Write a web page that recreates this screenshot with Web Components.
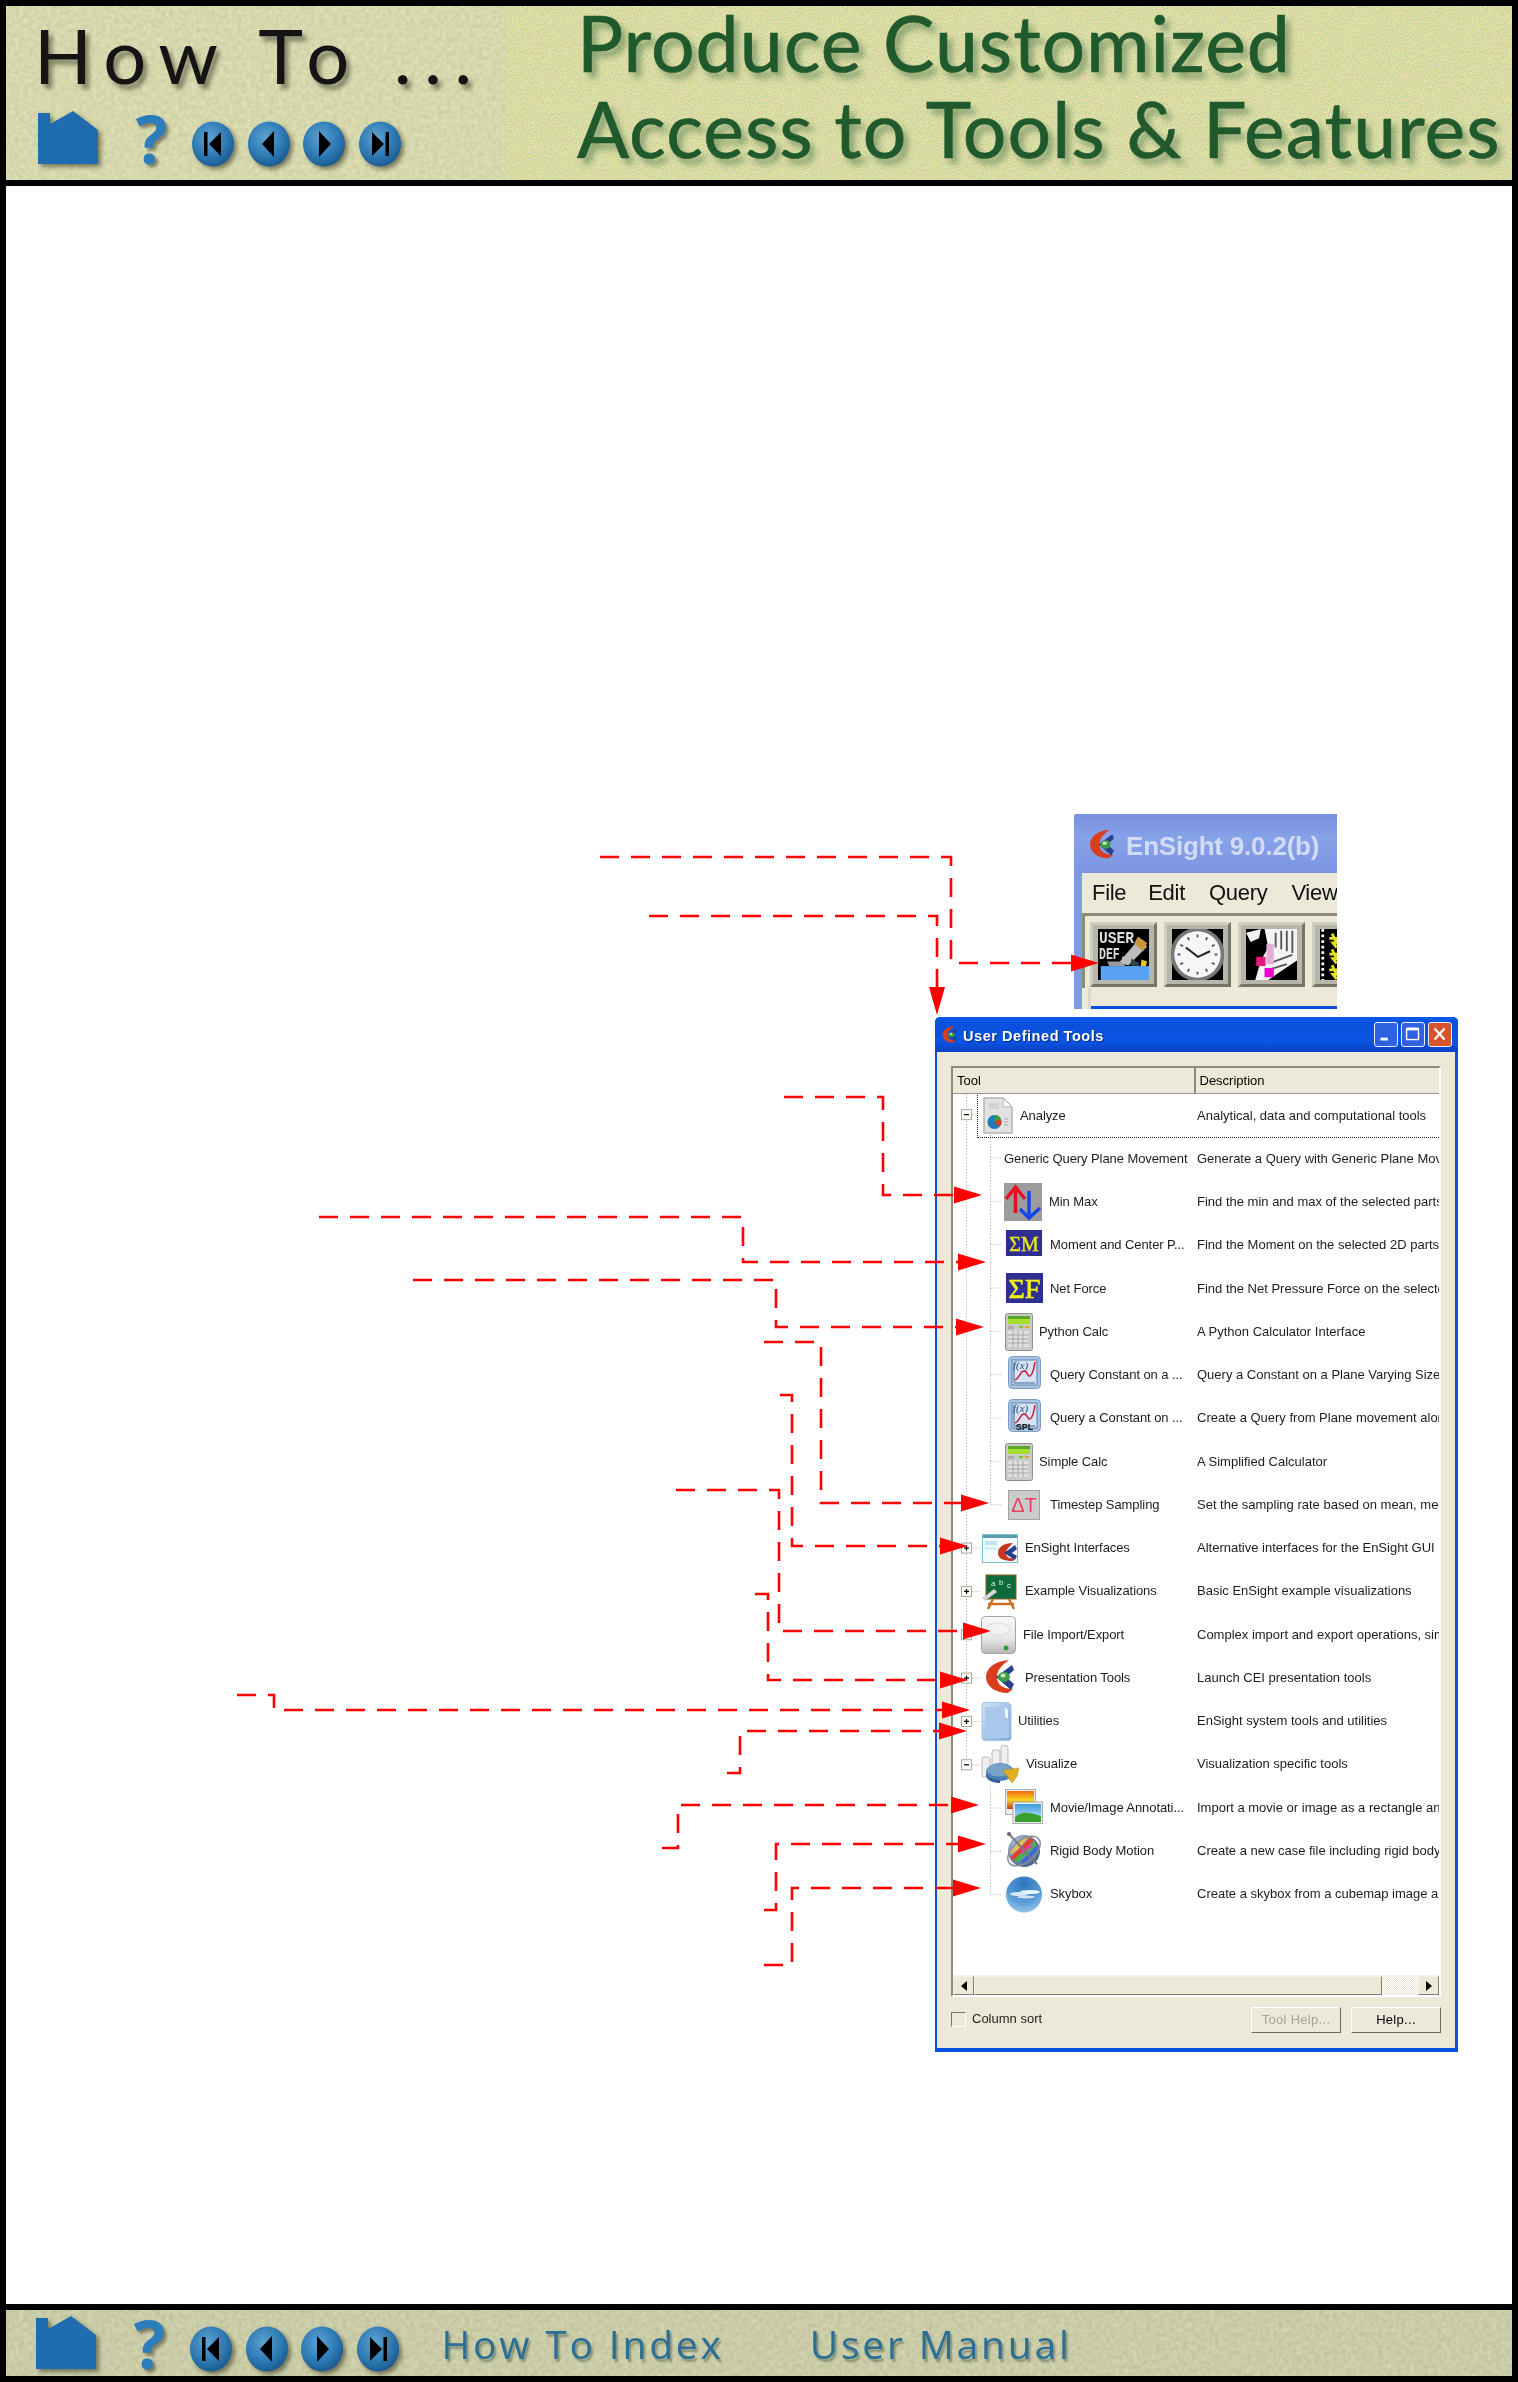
<!DOCTYPE html>
<html lang="en">
<head>
<meta charset="utf-8">
<title>How To Produce Customized Access to Tools &amp; Features</title>
<style>
  html, body { margin: 0; padding: 0; background: #000; }
</style>
</head>
<body>
<how-to-page>
  <how-to-banner slot="top"></how-to-banner>
  <ensight-toolbar slot="canvas"></ensight-toolbar>
  <tool-window slot="canvas">
    <tree-row icon="analyze" selected style="--ix:28px;--iw:32px;--ih:38px;--gap:7px">Analyze<span slot="desc">Analytical, data and computational tools</span></tree-row>
    <tree-row style="--ix:51px;--iw:0px;--ih:1px;--gap:0px">Generic Query Plane Movement<span slot="desc">Generate a Query with Generic Plane Movement</span></tree-row>
    <tree-row icon="minmax" style="--ix:51px;--iw:38px;--ih:38px;--gap:7px">Min Max<span slot="desc">Find the min and max of the selected parts</span></tree-row>
    <tree-row icon="summ" style="--ix:53px;--iw:36px;--ih:26px;--gap:8px;--iy:-2px">Moment and Center P...<span slot="desc">Find the Moment on the selected 2D parts</span></tree-row>
    <tree-row icon="sumf" style="--ix:53px;--iw:37px;--ih:30px;--gap:7px;--iy:-1px">Net Force<span slot="desc">Find the Net Pressure Force on the selected</span></tree-row>
    <tree-row icon="calc" style="--ix:52px;--iw:28px;--ih:38px;--gap:6px">Python Calc<span slot="desc">A Python Calculator Interface</span></tree-row>
    <tree-row icon="query" style="--ix:55px;--iw:33px;--ih:34px;--gap:9px;--iy:-2px">Query Constant on a ...<span slot="desc">Query a Constant on a Plane Varying Size</span></tree-row>
    <tree-row icon="queryspl" style="--ix:55px;--iw:33px;--ih:34px;--gap:9px;--iy:-2px">Query a Constant on ...<span slot="desc">Create a Query from Plane movement along</span></tree-row>
    <tree-row icon="calc" style="--ix:52px;--iw:28px;--ih:38px;--gap:6px">Simple Calc<span slot="desc">A Simplified Calculator</span></tree-row>
    <tree-row icon="deltat" style="--ix:55px;--iw:32px;--ih:30px;--gap:10px">Timestep Sampling<span slot="desc">Set the sampling rate based on mean, median</span></tree-row>
    <tree-row icon="interfaces" style="--ix:29px;--iw:36px;--ih:29px;--gap:7px">EnSight Interfaces<span slot="desc">Alternative interfaces for the EnSight GUI</span></tree-row>
    <tree-row icon="board" style="--ix:29px;--iw:35px;--ih:35px;--gap:8px">Example Visualizations<span slot="desc">Basic EnSight example visualizations</span></tree-row>
    <tree-row icon="disk" style="--ix:28px;--iw:35px;--ih:38px;--gap:7px">File Import/Export<span slot="desc">Complex import and export operations, similar</span></tree-row>
    <tree-row icon="logo" style="--ix:32px;--iw:30px;--ih:35px;--gap:10px;--iy:-1px">Presentation Tools<span slot="desc">Launch CEI presentation tools</span></tree-row>
    <tree-row icon="folder" style="--ix:28px;--iw:31px;--ih:39px;--gap:6px">Utilities<span slot="desc">EnSight system tools and utilities</span></tree-row>
    <tree-row icon="visualize" style="--ix:28px;--iw:38px;--ih:39px;--gap:7px">Visualize<span slot="desc">Visualization specific tools</span></tree-row>
    <tree-row icon="movie" style="--ix:52px;--iw:38px;--ih:35px;--gap:7px;--iy:-1px">Movie/Image Annotati...<span slot="desc">Import a movie or image as a rectangle and</span></tree-row>
    <tree-row icon="rigid" style="--ix:51px;--iw:39px;--ih:37px;--gap:7px;--iy:-1px">Rigid Body Motion<span slot="desc">Create a new case file including rigid body</span></tree-row>
    <tree-row icon="skybox" style="--ix:53px;--iw:36px;--ih:37px;--gap:8px">Skybox<span slot="desc">Create a skybox from a cubemap image and</span></tree-row>
  </tool-window>
  <callout-arrows slot="over"></callout-arrows>
  <how-to-footer slot="bottom"></how-to-footer>
</how-to-page>

<script>
  // Mottled paper fill behind the banners
  class NoiseFill extends HTMLElement {
    connectedCallback() {
      const base = (this.getAttribute('base') || '.83 .84 .66').split(' ').map(Number);
      const k = parseFloat(this.getAttribute('amount') || '.3');
      const freq = this.getAttribute('freq') || '.5';
      const mono = this.hasAttribute('mono');
      const row = (i) => {
        const cells = [0, 0, 0, 0];
        cells[mono ? 0 : i] = k;
        return `${cells.join(' ')} ${base[i] - k / 2}`;
      };
      this.attachShadow({ mode: 'open' }).innerHTML = `
        <style>
          :host { position: absolute; inset: 0; display: block; overflow: hidden; }
          svg { display: block; width: 100%; height: 100%; }
        </style>
        <svg>
          <filter id="n" x="0" y="0" width="100%" height="100%" color-interpolation-filters="sRGB">
            <feTurbulence type="fractalNoise" baseFrequency="${freq}" numOctaves="2" seed="4"/>
            <feColorMatrix type="matrix" values="${row(0)} ${row(1)} ${row(2)} 0 0 0 0 1"/>
          </filter>
          <rect width="100%" height="100%" filter="url(#n)"/>
        </svg>`;
    }
  }
  customElements.define('noise-fill', NoiseFill);

  // House, question mark and the four round page buttons
  class NavIcons extends HTMLElement {
    constructor() {
      super();
      const ball = (inner) => `
        <svg class="ball" viewBox="0 0 44 46">
          <defs><radialGradient id="g" cx=".42" cy=".36" r=".7">
            <stop offset="0" stop-color="#5fa4d2"/><stop offset=".6" stop-color="#2c79b4"/><stop offset="1" stop-color="#185488"/>
          </radialGradient></defs>
          <ellipse cx="22" cy="23" rx="21" ry="22.5" fill="url(#g)"/>
          ${inner}
        </svg>`;
      this.attachShadow({ mode: 'open' }).innerHTML = `
        <style>
          :host { display: flex; align-items: flex-end; filter: blur(.5px); }
          svg { display: block; filter: drop-shadow(3px 3px 2px rgba(50,50,30,.55)); }
          .house { width: 60px; height: 53px; }
          .help {
            font: 700 66px/52px "Open Sans", sans-serif;
            color: #2b7dbb; width: 37px; margin: 0 21px 0 35px; text-align: center;
            text-shadow: 3px 3px 3px rgba(50,50,30,.5);
          }
          .balls { display: flex; gap: 11.5px; margin-bottom: -3px; }
          .ball { width: 44px; height: 46px; }
        </style>
        <svg class="house" viewBox="0 0 60 53"><path d="M0 2H12V13L35 0 60 19V53H0Z" fill="#1f6cb0"/></svg>
        <span class="help">?</span>
        <div class="balls">
          ${ball('<path d="M13 11h3.500v24H13zM30 11v24L18 23Z" fill="#000"/>')}
          ${ball('<path d="M27 10v26L15 23Z" fill="#000"/>')}
          ${ball('<path d="M17 10v26l12-13Z" fill="#000"/>')}
          ${ball('<path d="M14 11v24l12-12ZM27.500 11H31v24h-3.500z" fill="#000"/>')}
        </div>`;
    }
  }
  customElements.define('nav-icons', NavIcons);

  class HowToBanner extends HTMLElement {
    constructor() {
      super();
      this.attachShadow({ mode: 'open' }).innerHTML = `
        <style>
          :host { display: flex; height: 174px; }
          .left, .right { position: relative; }
          .left { width: 500px; flex: none; }
          .right { flex: 1; }
          .stack { position: relative; height: 100%; box-sizing: border-box; }
          .left .stack { padding: 5px 0 0 28px; }
          .how {
            font: 400 76px/88px Lato, "Open Sans", sans-serif; letter-spacing: 12.400px; color: #141414;
            text-shadow: 4px 5px 4px rgba(60,60,40,.55); white-space: nowrap; filter: blur(.5px);
          }
          nav-icons { margin: 12px 0 0 4px; }
          .right .stack { padding: 0 0 0 71px; }
          .line {
            font: 400 77px/87px Lato, "Open Sans", sans-serif; color: #205a2c; white-space: nowrap;
            text-shadow: 5px 6px 6px rgba(45,95,55,.5); -webkit-text-stroke: .7px #205a2c; filter: blur(.5px);
            margin-top: -7px; letter-spacing: 1px;
          }
          .line + .line { margin-top: -1px; }
        </style>
        <div class="left">
          <noise-fill mono base=".84 .845 .68" amount=".12" freq=".22"></noise-fill>
          <div class="stack">
            <div class="how">How To ...</div>
            <nav-icons></nav-icons>
          </div>
        </div>
        <div class="right">
          <noise-fill base=".85 .86 .64" amount=".32" freq=".8"></noise-fill>
          <div class="stack">
            <div class="line">Produce Customized</div>
            <div class="line">Access to Tools &amp; Features</div>
          </div>
        </div>`;
    }
  }
  customElements.define('how-to-banner', HowToBanner);

  class HowToFooter extends HTMLElement {
    constructor() {
      super();
      this.attachShadow({ mode: 'open' }).innerHTML = `
        <style>
          :host { display: block; position: relative; height: 66px; }
          .row { position: relative; display: flex; align-items: center; height: 100%; padding: 0 0 0 30px; }
          nav-icons { margin-top: -2px; }
          a {
            font: 500 39px/1 "Open Sans", sans-serif; color: #2c6f94; white-space: nowrap; letter-spacing: 2.800px;
            text-shadow: 2px 3px 2px rgba(50,70,60,.45); text-decoration: none; filter: blur(.4px);
          }
          .index { margin-left: 42px; }
          .manual { margin-left: 86px; }
        </style>
        <noise-fill mono base=".79 .80 .655" amount=".12" freq=".22"></noise-fill>
        <div class="row">
          <nav-icons></nav-icons>
          <a class="index">How To Index</a>
          <a class="manual">User Manual</a>
        </div>`;
    }
  }
  customElements.define('how-to-footer', HowToFooter);

  // The drawn pictures for the tree and the toolbar
  const LOGO = `
    <path d="M24 1C10 2 1 9 1 18s9 16 22 16l5-4C18 30 12 26 12 18 12 11 17 6 24 1Z" fill="#d93d1c"/>
    <path d="M27 6 11 18l15 13 3-6-8-7 8-7Z" fill="#27418f"/>
    <ellipse cx="19" cy="18" rx="6" ry="5" fill="#3f9d45"/>
    <ellipse cx="18" cy="16.500" rx="2.500" ry="2" fill="#c5ecc0"/>`;
  const CALC = `
    <rect x=".5" y=".5" width="27" height="37" rx="2" fill="#c9cbc8" stroke="#8d918d"/>
    <rect x="3" y="3" width="22" height="8" fill="#a6e02c"/><rect x="3" y="3" width="22" height="3" fill="#5aa62a"/>
    <rect x="3" y="13" width="6" height="3" fill="#aaa"/><rect x="14" y="13" width="4" height="2" fill="#7fc03c"/><rect x="20" y="13" width="4" height="2" fill="#e0a030"/>
    <path d="M3 18h21v16H3Z" fill="#dfe1df"/><path d="M3 22h21M3 26h21M3 30h21M8 18v16M13 18v16M18 18v16" stroke="#a4a8a6"/>`;
  const QUERY = (extra) => `
    <rect x=".5" y=".5" width="32" height="32" rx="4" fill="#a9c4e2" stroke="#7d9cc2"/>
    <rect x="4" y="4" width="25" height="25" fill="#d6e3f2" stroke="#5f80ac"/>
    <text x="5" y="13" font-family="Liberation Serif" font-style="italic" font-size="11" fill="#234a80">f(x)</text>
    <path d="M6 6v21h21" fill="none" stroke="#3a66a0"/>
    <path d="M7 24c5-2 5-9 9-9s3 6 6 5 4-8 5-14" fill="none" stroke="#c8203a" stroke-width="1.500"/>${extra}`;
  const ICONS = {
    logo: ['0 0 30 35', LOGO],
    analyze: ['0 0 32 38', `
      <path d="M3 1H22L31 10V36H3Z" fill="#e2e2e2" stroke="#b4b4b4" stroke-width="1.500"/>
      <path d="M22 1V10H31Z" fill="#fafafa" stroke="#b4b4b4"/>
      <rect x="8" y="6" width="10" height="6" fill="#d2d2d2"/>
      <circle cx="13.500" cy="25" r="7" fill="#1d7bb8"/><path d="M13.500 25V18A7 7 0 0 1 20 22Z" fill="#3da140"/><path d="M13.500 25 20 22A7 7 0 0 1 18 30Z" fill="#d43f20"/>
      <path d="M23 22h4M23 25h4M23 28h4" stroke="#bbb" stroke-width="1.500"/>`],
    minmax: ['0 0 38 38', `
      <rect width="38" height="38" fill="#9c9c9c"/>
      <path d="M11.500 30V5M2 16 11.500 4 21 16" fill="none" stroke="#e8101c" stroke-width="3.500"/>
      <path d="M25 8V34M16 26 25 35 36 25" fill="none" stroke="#1846e8" stroke-width="3.500"/>`],
    summ: ['0 0 36 26', `<rect width="36" height="26" fill="#2f2f92"/>
      <text x="18" y="20.500" text-anchor="middle" font-family="Liberation Serif" font-size="20" fill="#e6e620" stroke="#e6e620" stroke-width=".4">ΣM</text>`],
    sumf: ['0 0 37 30', `<rect width="37" height="30" fill="#2f2f92"/>
      <text x="18.500" y="25" text-anchor="middle" font-family="Liberation Serif" font-size="28" fill="#efef14" stroke="#efef14" stroke-width=".6">ΣF</text>`],
    calc: ['0 0 28 38', CALC],
    query: ['0 0 33 34', QUERY('')],
    queryspl: ['0 0 33 34', QUERY('<text x="16.500" y="31" text-anchor="middle" font-family="Liberation Sans" font-weight="bold" font-size="9" fill="#111">SPL</text>')],
    deltat: ['0 0 32 30', `<rect x=".5" y=".5" width="31" height="29" fill="#cbcbcb" stroke="#a3a3a3"/>
      <text x="16" y="22" text-anchor="middle" font-family="Liberation Sans" font-size="20" fill="#ec3f62">ΔT</text>`],
    interfaces: ['0 0 36 29', `<rect x=".5" y=".5" width="35" height="28" fill="#f4fbfd" stroke="#7cc4d2"/><rect x="1" y="1" width="34" height="3" fill="#5a9cb0"/>
      <rect x="3" y="7" width="12" height="4" fill="#bfe8f2"/><rect x="3" y="13" width="14" height="3" fill="#d7f1f6"/>
      <path d="M31 9C22 9 16 13 16 19s6 8 15 8l2-3c-6 1-9-1-9-5 0-3 3-6 7-10Z" fill="#c9381e"/><path d="M33 11 22 19l11 7 2-4-5-3 5-4Z" fill="#27418f"/>`],
    board: ['0 0 35 35', `<rect x="4" y="1" width="30" height="24" fill="#0f6a3a" stroke="#8a5a20"/>
      <text x="9" y="12" font-family="Liberation Sans" font-size="8" fill="#dff2e2">a</text><text x="17" y="11" font-family="Liberation Sans" font-size="8" fill="#dff2e2">b</text><text x="25" y="14" font-family="Liberation Sans" font-size="8" fill="#dff2e2">c</text>
      <path d="M1 24 12 15l3 3L4 26Z" fill="#d8d8d8" stroke="#999" stroke-width=".500"/>
      <path d="M11 25 6 35M27 25l5 10M6 30h26" stroke="#c8702a" stroke-width="2.500" fill="none"/>`],
    disk: ['0 0 35 38', `<defs><linearGradient id="d" x1="0" y1="0" x2="0" y2="1"><stop offset="0" stop-color="#f8f8f8"/><stop offset=".6" stop-color="#e8e8e8"/><stop offset="1" stop-color="#b6b6b6"/></linearGradient></defs>
      <rect x=".5" y=".5" width="34" height="37" rx="4" fill="url(#d)" stroke="#a4a4a4"/><ellipse cx="17" cy="13" rx="12" ry="6" fill="#f2f2f2" stroke="#dcdcdc"/>
      <circle cx="25" cy="32" r="2.500" fill="#2e9a3c"/>`],
    folder: ['0 0 31 39', `<defs><linearGradient id="f" x1="0" y1="0" x2="1" y2="1"><stop offset="0" stop-color="#d2e4f7"/><stop offset="1" stop-color="#7aa8dc"/></linearGradient></defs>
      <path d="M1 2 3 .5H27L30 3V37L28 38.500H3L1 37Z" fill="url(#f)" stroke="#a6c2e2"/><path d="M4 5H24V16L28 19V36H4Z" fill="#a9c8ec"/><path d="M24 5l3 3v9l-3-2Z" fill="#eef5fc"/>`],
    visualize: ['0 0 38 39', `<rect x="1" y="12" width="8" height="20" rx="2" fill="#eee" stroke="#bbb"/><rect x="11" y="5" width="8" height="22" rx="2" fill="#eee" stroke="#bbb"/><rect x="20" y="0.500" width="7" height="26" rx="2" fill="#eee" stroke="#bbb"/>
      <ellipse cx="19" cy="27" rx="14" ry="9" fill="#4b80b4"/><path d="M5 27v3c0 5 7 8 14 8v-3c-7 0-14-3-14-8Z" fill="#2d5f94"/><ellipse cx="18" cy="25" rx="12" ry="6.500" fill="#7aa2c8"/>
      <path d="M22 25 38 23 36 31 31 38Z" fill="#e2ae22" stroke="#b5871a" stroke-width=".500"/>`],
    movie: ['0 0 38 35', `<defs><linearGradient id="a" x1="0" y1="0" x2="0" y2="1"><stop offset="0" stop-color="#f06a10"/><stop offset=".5" stop-color="#f8d020"/><stop offset="1" stop-color="#c83018"/></linearGradient>
      <linearGradient id="s" x1="0" y1="0" x2="0" y2="1"><stop offset="0" stop-color="#3a9ce0"/><stop offset="1" stop-color="#d6eefa"/></linearGradient></defs>
      <rect x=".5" y=".5" width="30" height="25" fill="#eee" stroke="#aaa"/><rect x="2" y="2" width="27" height="18" fill="url(#a)"/>
      <rect x="8" y="13" width="29.500" height="21.500" fill="#eee" stroke="#aaa"/><rect x="10" y="15" width="26" height="18" fill="url(#s)"/><path d="M10 33V28C16 22 24 23 36 27V33Z" fill="#3aa030"/>`],
    rigid: ['0 0 39 37', `<defs><radialGradient id="r" cx=".35" cy=".35" r=".8"><stop offset="0" stop-color="#c7d4f0"/><stop offset="1" stop-color="#33507c"/></radialGradient></defs>
      <circle cx="20" cy="20" r="16" fill="url(#r)"/>
      <path d="M8 28 28 8" stroke="#e0402c" stroke-width="5"/><path d="M12 30 31 12" stroke="#46b04a" stroke-width="5"/><path d="M18 32 33 17" stroke="#3a68d8" stroke-width="4"/><path d="M7 22 22 7" stroke="#e8c030" stroke-width="3"/><path d="M17 22 28 14" stroke="#e040b0" stroke-width="3"/>
      <ellipse cx="20" cy="20" rx="19" ry="11" transform="rotate(-40 20 20)" fill="none" stroke="#8a8f96" stroke-width="1.500"/>
      <path d="M4 2 33 33" stroke="#747a82" stroke-width="2"/><circle cx="5" cy="3" r="2" fill="#667"/>`],
    skybox: ['0 0 36 37', `<defs><radialGradient id="k" cx=".5" cy=".2" r=".9"><stop offset="0" stop-color="#2c74bc"/><stop offset=".6" stop-color="#5d9fd8"/><stop offset="1" stop-color="#a9d2ee"/></radialGradient></defs>
      <circle cx="18" cy="18.500" r="18" fill="url(#k)"/><ellipse cx="24" cy="16" rx="10" ry="2" fill="#eaf3fa"/><ellipse cx="13" cy="18" rx="9" ry="2" fill="#d7e8f6"/><ellipse cx="20" cy="21" rx="9" ry="1.500" fill="#cfe3f4"/>`]
  };

  class ToolIcon extends HTMLElement {
    connectedCallback() {
      const icon = ICONS[this.getAttribute('name')];
      this.attachShadow({ mode: 'open' }).innerHTML = `
        <style>
          :host { display: block; }
          svg { display: block; width: 100%; height: 100%; overflow: visible; }
        </style>
        ${icon ? `<svg viewBox="${icon[0]}">${icon[1]}</svg>` : ''}`;
    }
  }
  customElements.define('tool-icon', ToolIcon);

  class TreeRow extends HTMLElement {
    connectedCallback() {
      const icon = this.getAttribute('icon');
      this.attachShadow({ mode: 'open' }).innerHTML = `
        <style>
          :host {
            display: grid; grid-template-columns: 244px 1fr; height: 43.25px; align-items: center;
            position: relative; box-sizing: border-box; white-space: nowrap; color: #1c1c1c;
          }
          :host([selected])::after {
            content: ""; position: absolute; left: 24px; right: -2px; top: -2px; bottom: -1px; border: 1px dotted #222;
          }
          .tool { display: flex; align-items: center; padding-left: var(--ix, 0); min-width: 0; }
          tool-icon { flex: none; width: var(--iw); height: var(--ih); transform: translateY(var(--iy, 0)); }
          .label { margin-left: var(--gap, 6px); letter-spacing: -.08px; }
          .desc { overflow: hidden; min-width: 0; }
        </style>
        <div class="tool">
          ${icon ? `<tool-icon name="${icon}"></tool-icon>` : ''}
          <span class="label"><slot></slot></span>
        </div>
        <div class="desc"><slot name="desc"></slot></div>`;
    }
  }
  customElements.define('tree-row', TreeRow);

  // Dialog with the tree of tools; rows are slotted in by the page
  class ToolWindow extends HTMLElement {
    constructor() {
      super();
      const h = 43.25;
      const mid = (i) => (21.6 + i * h - 1).toFixed(1);
      const parents = [0, 10, 11, 12, 13, 14, 15];
      let lines = `M13.500 0V${mid(15)}M37.500 41V${mid(9)}M37.500 691V${mid(18)}`;
      for (let i = 0; i < 19; i++) {
        lines += parents.includes(i) ? `M13.500 ${mid(i)}H27` : `M37.500 ${mid(i)}H49`;
      }
      let boxes = '';
      parents.forEach((i) => {
        const y = parseFloat(mid(i));
        const minus = i === 0 || i === 15;
        boxes += `<rect x="8.500" y="${y - 5}" width="10" height="10" fill="#fff" stroke="#a8a899"/>
          <path d="M11 ${y}h5${minus ? '' : `M13.500 ${y - 2.500}v5`}" stroke="#000" stroke-width="1.200"/>`;
      });
      this.attachShadow({ mode: 'open' }).innerHTML = `
        <style>
          :host {
            position: absolute; left: 929px; top: 831px; width: 523px; height: 1035px; box-sizing: border-box;
            display: flex; flex-direction: column; background: #0a4fe0; border-radius: 5px 5px 0 0;
            font: 13px/16px "Liberation Sans", Arial, sans-serif; filter: blur(.35px); padding: 0 3px 4px 2px;
          }
          .title {
            height: 35px; flex: none; display: flex; align-items: center; margin: 0 -3px 0 -2px; padding: 0 6px 0 7px;
            background: linear-gradient(#0a5be8, #0a50dc 20%, #0b55e4 70%, #0a3fc0);
            border-radius: 5px 5px 0 0; color: #fff; font: bold 14.500px/1 "Liberation Sans", sans-serif; letter-spacing: .55px;
            text-shadow: 1px 1px 1px #0a2a80; box-sizing: border-box;
          }
          .title tool-icon { width: 15px; height: 19px; margin-right: 6px; flex: none; }
          .title span { flex: 1; padding-top: 4px; }
          .wb { width: 24px; height: 25px; margin-left: 3px; box-sizing: border-box; border: 1px solid #e8eefc; border-radius: 3px; background: #2f62e0; }
          .wb svg { display: block; width: 100%; height: 100%; }
          .wb.close { background: #d8532c; }
          .client { flex: 1; min-height: 0; background: #ece9d8; padding: 14px 14px 0 14px; display: flex; flex-direction: column; }
          .panel {
            height: 931px; flex: none; box-sizing: border-box; border: 2px solid; border-color: #8c8a78 #fff #fff #8c8a78;
            display: flex; flex-direction: column; background: #ece9d8;
          }
          .head { display: grid; grid-template-columns: 240.500px 1fr; height: 26px; flex: none; border-bottom: 1px solid #98968a; box-sizing: border-box; }
          .head div { padding: 5px 0 0 4px; }
          .head div + div { border-left: 2px solid #8c8a78; }
          .list { position: relative; flex: 1; background: #fff; min-height: 0; overflow: hidden; }
          .list svg { position: absolute; left: 0; top: 0; width: 100%; height: 100%; }
          .rows { position: relative; }
          .scroll { height: 20px; flex: none; display: flex; background: #ece9d8; border-top: 1px solid #f6f4ea; box-sizing: border-box; }
          .sb { flex: none; box-sizing: border-box; border: 1px solid; border-color: #f4f2e6 #807e6e #807e6e #f4f2e6; display: flex; align-items: center; justify-content: center; font-size: 0; }
          .sb svg { width: 6px; height: 10px; }
          .btn { width: 21px; }
          .thumb { width: 408px; }
          .track { flex: 1; background: repeating-conic-gradient(#ece9d8 0 25%, #fff 0 50%) 0 0 / 2px 2px; }
          .foot { flex: 1; display: flex; align-items: flex-start; padding: 10px 0 0 0; }
          .check { width: 15px; height: 15px; flex: none; box-sizing: border-box; background: #ece9d8; border: 1px solid; border-color: #7a7868 #fff #fff #7a7868; margin: 5px 6px 0 0; }
          .sort { margin-top: 4px; flex: 1; color: #222; }
          .pb {
            width: 90px; height: 26px; box-sizing: border-box; border: 1px solid; border-color: #fff #6e6c5c #6e6c5c #fff;
            display: flex; align-items: center; justify-content: center; margin-left: 10px; letter-spacing: .3px;
          }
          .pb.off { color: #a5a396; }
        </style>
        <div class="title">
          <tool-icon name="logo"></tool-icon>
          <span>User Defined Tools</span>
          <div class="wb"><svg viewBox="0 0 24 25"><rect x="6" y="16" width="8" height="3" fill="#fff"/></svg></div>
          <div class="wb"><svg viewBox="0 0 24 25"><rect x="5" y="6" width="13" height="12" fill="none" stroke="#fff" stroke-width="1.500"/><rect x="5" y="5" width="13" height="3" fill="#fff"/></svg></div>
          <div class="wb close"><svg viewBox="0 0 24 25"><path d="M6 6 17 18M17 6 6 18" stroke="#fff" stroke-width="2.500"/></svg></div>
        </div>
        <div class="client">
          <div class="panel">
            <div class="head"><div>Tool</div><div>Description</div></div>
            <div class="list">
              <svg viewBox="0 0 485 881" preserveAspectRatio="xMinYMin slice">
                <path d="${lines}" fill="none" stroke="#a9a99a" stroke-dasharray="1 2"/>
                ${boxes}
              </svg>
              <div class="rows"><slot></slot></div>
            </div>
            <div class="scroll">
              <div class="sb btn"><svg viewBox="0 0 6 10"><path d="M6 0V10L0 5Z"/></svg></div>
              <div class="sb thumb"></div>
              <div class="track"></div>
              <div class="sb btn"><svg viewBox="0 0 6 10"><path d="M0 0V10L6 5Z"/></svg></div>
            </div>
          </div>
          <div class="foot">
            <div class="check"></div>
            <div class="sort">Column sort</div>
            <div class="pb off">Tool Help...</div>
            <div class="pb">Help...</div>
          </div>
        </div>`;
    }
  }
  customElements.define('tool-window', ToolWindow);

  // Crop of the EnSight main window: title, menu and tool icons
  class EnsightToolbar extends HTMLElement {
    constructor() {
      super();
      this.attachShadow({ mode: 'open' }).innerHTML = `
        <style>
          :host {
            position: absolute; left: 1068px; top: 628px; width: 263px; height: 195px; overflow: hidden;
            display: flex; flex-direction: column; background: #7e9ae4; filter: blur(.35px);
            font-family: "Liberation Sans", sans-serif; border-top-left-radius: 3px;
          }
          .bar { height: 59px; flex: none; display: flex; align-items: center; padding-left: 15px; background: linear-gradient(#7890e0, #86a2e8 40%, #7c96e2); }
          .bar tool-icon { width: 26px; height: 30px; flex: none; }
          .bar b { font-size: 26px; letter-spacing: -.2px; color: #d3dcf6; margin-left: 11px; white-space: nowrap; padding-top: 5px; }
          .body { flex: 1; margin-left: 8px; background: #ece9d8; display: flex; flex-direction: column; min-height: 0; }
          .menu { height: 40px; flex: none; display: flex; align-items: center; font-size: 22px; color: #111; white-space: nowrap; padding-left: 10px; overflow: hidden; letter-spacing: -.3px; }
          .menu span:nth-child(2) { margin-left: 22px; }
          .menu span:nth-child(3) { margin-left: 24px; }
          .menu span:nth-child(4) { margin-left: 24px; }
          .tools { height: 75px; flex: none; display: flex; gap: 7px; box-sizing: border-box; border-top: 3px solid #8d8b78; border-left: 3px solid #8d8b78; padding: 6px 0 0 5px; overflow: hidden; }
          .tb { width: 67px; height: 65px; flex: none; box-sizing: border-box; background: #b7b6aa; border: 3px solid; border-color: #cfcdbf #77756a #77756a #cfcdbf; padding: 4px; }
          .tb svg { display: block; width: 100%; height: 100%; }
          .rest { flex: 1; border-left: 3px solid #dcd9c8; margin-left: 6px; display: flex; flex-direction: column; justify-content: flex-end; }
          .rest div { height: 3px; background: #0a4fe0; margin-left: 0; }
        </style>
        <div class="bar"><tool-icon name="logo"></tool-icon><b>EnSight 9.0.2(b)</b></div>
        <div class="body">
          <div class="menu"><span>File</span><span>Edit</span><span>Query</span><span>View</span></div>
          <div class="tools">
            <div class="tb"><svg viewBox="0 0 55 55">
              <rect width="55" height="55" fill="#000"/>
              <text x="1" y="15" font-family="Liberation Mono" font-weight="bold" font-size="17" textLength="38" lengthAdjust="spacingAndGlyphs" fill="#ddd">USER</text>
              <text x="1" y="32" font-family="Liberation Mono" font-weight="bold" font-size="17" textLength="30" lengthAdjust="spacingAndGlyphs" fill="#ddd">DEF.</text>
              <path d="M22 37 43 12l10 7-20 20Z" fill="#bbb"/><path d="M43 8l10 7-4 9-10-8Z" fill="#c8963c"/>
              <path d="M10 35h14l6 5H12Z" fill="#9a9a9a"/><path d="M36 32l9 5-3 5-7-3Z" fill="#344"/><path d="M47 33l6 2-2 7-5-2Z" fill="#e0c820"/>
              <rect x="3" y="40" width="52" height="15" fill="#5aa2f4"/>
            </svg></div>
            <div class="tb"><svg viewBox="0 0 55 55">
              <rect width="55" height="55" fill="#000"/><circle cx="27.500" cy="27.500" r="29" fill="#777"/><circle cx="27.500" cy="27.500" r="25" fill="#f6f6f6"/>
              <path d="M27.500 6v3M27.500 46v3M6 27.500h3M46 27.500h3M17 9l1.500 3M38 9l-1.500 3M17 46l1.500-3M38 46l-1.500-3M9 17l3 1.500M46 17l-3 1.500M9 38l3-1.500M46 38l-3-1.500" stroke="#555" stroke-width="2"/>
              <path d="M15 20 28 30 41 24" fill="none" stroke="#222" stroke-width="2.200"/>
            </svg></div>
            <div class="tb"><svg viewBox="0 0 55 55">
              <rect width="55" height="55" fill="#000"/>
              <path d="M20 0H55V34L40 44 24 55H10L16 34 24 20Z" fill="#f4f4f4"/>
              <path d="M32 4v16M38 2v20M44 2v22M50 2v24M28 36l22-8M24 44l20-6" stroke="#555" stroke-width="2" fill="none"/>
              <path d="M0 4 16 0 14 10 5 14Z" fill="#f4f4f4"/><rect x="22" y="16" width="8" height="22" fill="#e4b0d8"/>
              <rect x="11" y="30" width="10" height="10" fill="#e01a80"/><rect x="20" y="42" width="10" height="10" fill="#f000d0"/>
            </svg></div>
            <div class="tb"><svg viewBox="0 0 55 55">
              <rect width="55" height="55" fill="#000"/>
              <path d="M3 0V55" stroke="#fff" stroke-width="3" stroke-dasharray="3 3"/>
              <path d="M10 10h14M13 5l5 10-4 0 4 5M10 27h14M13 22l5 10-4 0 4 5M10 44h14M13 39l5 10-4 0 4 5" stroke="#e8e020" stroke-width="3" fill="none"/>
            </svg></div>
          </div>
          <div class="rest"><div></div></div>
        </div>`;
    }
  }
  customElements.define('ensight-toolbar', EnsightToolbar);

  // Red dashed callouts, drawn in page coordinates
  class CalloutArrows extends HTMLElement {
    constructor() {
      super();
      const runs = [
        [[600, 857], [951, 857], [951, 963], [1099, 963]],
        [[649, 916], [937, 916], [937, 1015]],
        [[784, 1097], [883, 1097], [883, 1195], [982, 1195]],
        [[319, 1217], [743, 1217], [743, 1262], [986, 1262]],
        [[413, 1280], [776, 1280], [776, 1327], [984, 1327]],
        [[764, 1342], [821, 1342], [821, 1503], [989, 1503]],
        [[780, 1395], [792, 1395], [792, 1546], [968, 1546]],
        [[676, 1490], [779, 1490], [779, 1631], [991, 1631]],
        [[755, 1594], [768, 1594], [768, 1680], [968, 1680]],
        [[237, 1695], [274, 1695], [274, 1710], [970, 1710]],
        [[727, 1773], [740, 1773], [740, 1731], [967, 1731]],
        [[662, 1848], [678, 1848], [678, 1805], [979, 1805]],
        [[764, 1910], [776, 1910], [776, 1844], [986, 1844]],
        [[764, 1965], [792, 1965], [792, 1888], [981, 1888]]
      ];
      let lines = '';
      let heads = '';
      runs.forEach((pts) => {
        const [tx, ty] = pts[pts.length - 1];
        const [px] = pts[pts.length - 2];
        const down = tx === px;
        const shown = pts.slice(0, -1).concat([down ? [tx, ty - 20] : [tx - 20, ty]]);
        lines += `<path d="M${shown.map((p) => p.join(' ')).join('L')}"/>`;
        heads += down
          ? `<polygon points="${tx},${ty} ${tx - 8},${ty - 28} ${tx + 8},${ty - 28}"/>`
          : `<polygon points="${tx},${ty} ${tx - 28},${ty - 8.5} ${tx - 28},${ty + 8.5}"/>`;
      });
      this.attachShadow({ mode: 'open' }).innerHTML = `
        <style>
          :host { position: absolute; left: 0; top: 0; width: 1518px; height: 2382px; display: block; pointer-events: none; }
          svg { display: block; width: 100%; height: 100%; }
        </style>
        <svg viewBox="0 0 1518 2382">
          <g fill="none" stroke="#f00" stroke-width="2.600" stroke-dasharray="19 12">${lines}</g>
          <g fill="#f00">${heads}</g>
        </svg>`;
    }
  }
  customElements.define('callout-arrows', CalloutArrows);

  // Black framed page: banner, white canvas, footer
  class HowToPage extends HTMLElement {
    constructor() {
      super();
      this.attachShadow({ mode: 'open' }).innerHTML = `
        <style>
          :host {
            display: flex; flex-direction: column; gap: 6px; position: relative; box-sizing: border-box;
            width: 1518px; height: 2382px; padding: 6px; background: #000; overflow: hidden;
          }
          .canvas { flex: 1; background: #fff; position: relative; min-height: 0; }
        </style>
        <slot name="top"></slot>
        <div class="canvas"><slot name="canvas"></slot></div>
        <slot name="bottom"></slot>
        <slot name="over"></slot>`;
    }
  }
  customElements.define('how-to-page', HowToPage);
</script>
</body>
</html>
